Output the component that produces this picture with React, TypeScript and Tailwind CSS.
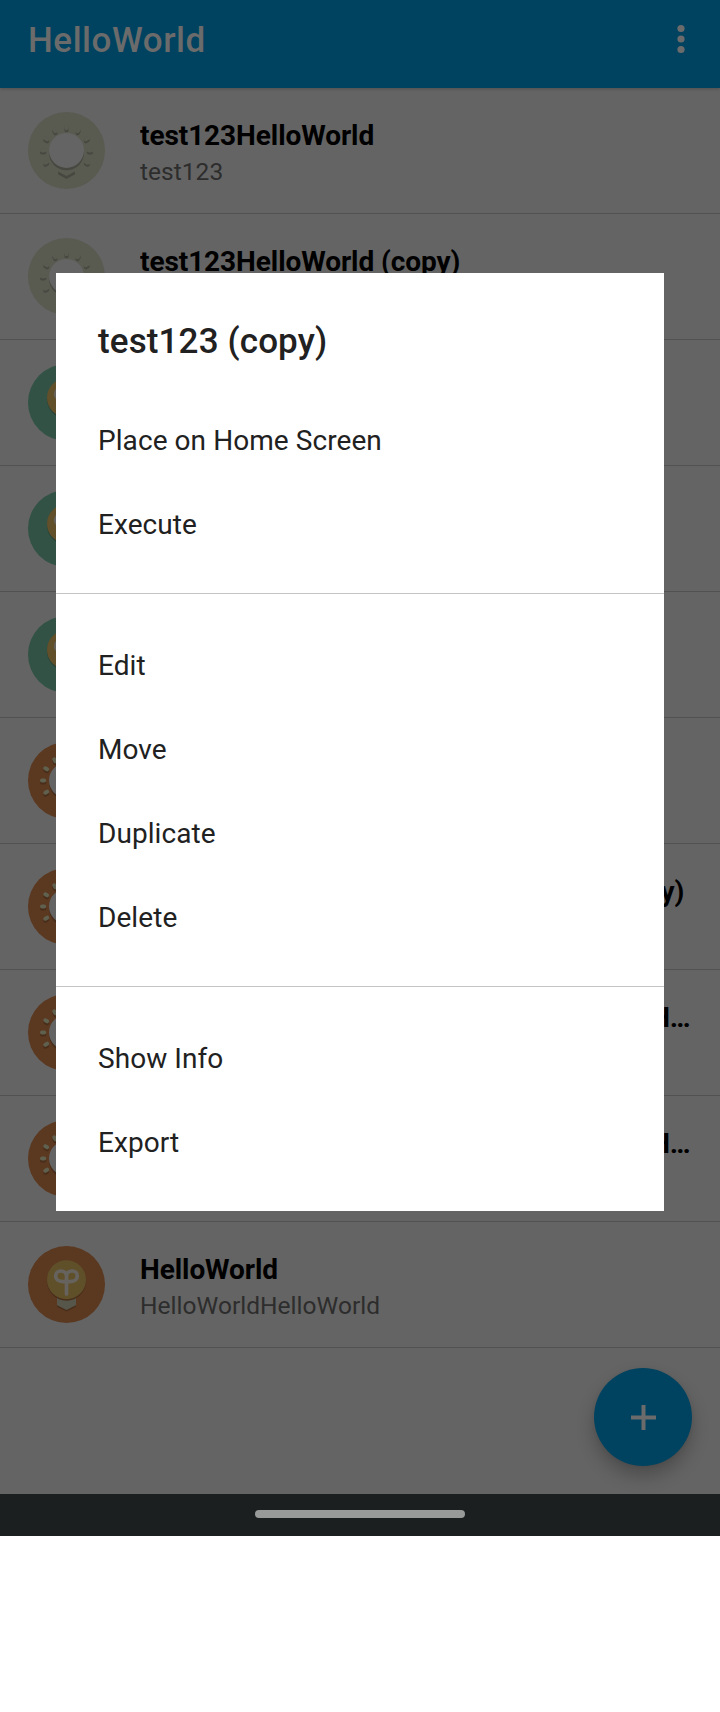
type Kind = "pale" | "green" | "sun" | "bulb";

const RAYS = [-120, -90, -60, -30, 0, 30, 60, 90, 120];

function SunIcon({ bg, ray, base, shadow }: { bg: string; ray: string; base: string; shadow: string }) {
  return (
    <svg viewBox="0 0 77 77" className="size-[77px] shrink-0">
      <circle cx="38.5" cy="38.5" r="38.5" fill={bg} />
      <g fill={shadow}>
        {RAYS.map((a) => (
          <g key={a} transform="translate(0 2)">
            <rect x="36.5" y="12" width="4" height="6.2" rx="2" transform={`rotate(${a} 38.5 38.5)`} />
          </g>
        ))}
        <path d="M30 59.500l8.500 4.500 8.500-4.500v2.800L38.500 67 30 62.300z" />
        <circle cx="38.5" cy="40.8" r="17.5" />
      </g>
      <g fill={ray}>
        {RAYS.map((a) => (
          <rect key={a} x="36.5" y="12" width="4" height="6.2" rx="2" transform={`rotate(${a} 38.5 38.5)`} />
        ))}
      </g>
      {base !== bg && <path d="M30 57.500q8.500 3 17 0V60l-8.500 4.500L30 60z" fill={base} />}
      <circle cx="38.5" cy="38.4" r="17.5" fill="#646464" />
    </svg>
  );
}

function BulbIcon({ bg, glass, shadow }: { bg: string; glass: string; shadow: string }) {
  return (
    <svg viewBox="0 0 77 77" className="size-[77px] shrink-0">
      <circle cx="38.5" cy="38.5" r="38.5" fill={bg} />
      <path d="M29 51h19v9.800L38.500 65.600 29 60.800z" fill={shadow} />
      <path d="M29 50h19v9.200L38.500 64 29 59.200z" fill="#56564a" />
      <circle cx="38.5" cy="35.3" r="19.5" fill={shadow} />
      <circle cx="38.5" cy="33.7" r="19.5" fill={glass} />
      <path
        d="M38.500 48V30.500C38.500 27 36 25 32.900 25c-3 0-5.200 2.200-5.200 5 0 3.600 3.600 5.700 7.600 5.700h6.400c4 0 7.600-2.100 7.600-5.700 0-2.800-2.200-5-5.200-5-3.100 0-5.600 2-5.600 5.500"
        fill="none"
        stroke="#66625e"
        strokeWidth="3.700"
        strokeLinecap="round"
        strokeLinejoin="round"
      />
    </svg>
  );
}

function RowIcon({ kind }: { kind: Kind }) {
  if (kind === "pale") return <SunIcon bg="#595a50" ray="#595a50" base="#595a50" shadow="#474840" />;
  if (kind === "sun") return <SunIcon bg="#5b3820" ray="#60604f" base="#59594c" shadow="#482d1a" />;
  if (kind === "green") return <BulbIcon bg="#315245" glass="#62502b" shadow="#274237" />;
  return <BulbIcon bg="#5b3820" glass="#60502a" shadow="#482d1a" />;
}

const ROWS: { kind: Kind; title: string; sub: string }[] = [
  { kind: "pale", title: "test123HelloWorld", sub: "test123" },
  { kind: "pale", title: "test123HelloWorld (copy)", sub: "test123" },
  { kind: "green", title: "test123", sub: "test123" },
  { kind: "green", title: "test123 (copy)", sub: "test123" },
  { kind: "green", title: "test123 (copy)", sub: "test123" },
  { kind: "sun", title: "test123HelloWorld", sub: "test123" },
  { kind: "sun", title: "test123HelloWorldHelloWorld (copy) (copy)", sub: "test123" },
  { kind: "sun", title: "test123HelloWorldHelloWorldHelloWorldHelloWorld", sub: "test123" },
  { kind: "sun", title: "test123HelloWorldHelloWorldHelloWorldHelloWorld", sub: "test123" },
  { kind: "bulb", title: "HelloWorld", sub: "HelloWorldHelloWorld" },
];

const GROUPS = [
  ["Place on Home Screen", "Execute"],
  ["Edit", "Move", "Duplicate", "Delete"],
  ["Show Info", "Export"],
];

export default function App() {
  return (
    <div className="flex h-[1712px] w-[720px] flex-col bg-white font-['Roboto',sans-serif]">
      <div className="relative flex h-[1536px] flex-col overflow-hidden bg-[#646464]">
        <header className="relative flex h-[88px] shrink-0 items-start justify-between bg-[#004360] pt-[19px] pr-[35px] pl-7 shadow-[0_1px_3px_rgba(0,0,0,0.2)]">
          <h1 className="pt-px text-[35px] leading-[41px] font-medium tracking-[0.53px] text-[#6b6b6b]">HelloWorld</h1>
          <svg viewBox="0 0 8 30" className="mt-[5px] h-[30px] w-2" fill="#6b6b6b">
            <circle cx="4" cy="4.5" r="3.6" />
            <circle cx="4" cy="15" r="3.6" />
            <circle cx="4" cy="25.5" r="3.6" />
          </svg>
        </header>
        <ul className="flex-1">
          {ROWS.map((r, i) => (
            <li key={i} className="flex h-[126px] items-center border-b border-[#525252] px-7">
              <RowIcon kind={r.kind} />
              <div className="ml-[35px] h-[72px] min-w-0 flex-1 pt-[3px]">
                <div className="truncate text-[28px] leading-[36px] font-bold tracking-[-0.08px] text-black">
                  {r.title}
                </div>
                <div className="truncate text-[24.5px] leading-[36px] tracking-[0.03px] text-[#2d2d2d]">{r.sub}</div>
              </div>
            </li>
          ))}
        </ul>
        <button className="absolute top-[1368px] left-[594px] flex size-[98px] items-center justify-center rounded-full bg-[#004360] shadow-[0_10px_18px_rgba(0,0,0,0.24),0_1px_4px_rgba(0,0,0,0.06)]">
          <svg viewBox="0 0 25 25" className="size-[25px]" fill="#6b6b6b">
            <path d="M10.500 0h4v10.500H25v4H14.500V25h-4V14.500H0v-4h10.500z" />
          </svg>
        </button>
        <footer className="relative flex h-[42px] shrink-0 justify-center bg-[#1b1f20] pt-4">
          <span className="h-2 w-[210px] rounded-full bg-[#989a99]" />
        </footer>
        <section className="absolute top-[273px] left-[56px] h-[938px] w-[608px] bg-white text-[#212121]">
          <h2 className="px-[42px] pt-[48px] text-[35px] leading-[41px] font-medium tracking-[0.13px]">
            test123 (copy)
          </h2>
          {GROUPS.map((g, i) => (
            <ul key={i} className={i === 0 ? "pt-[36px] pb-[27px]" : "border-t border-[#c4c4c4] pt-[29px] pb-[27px]"}>
              {g.map((t) => (
                <li key={t} className="flex h-[84px] items-center px-[42px] pt-px text-[28px] tracking-[0.07px]">
                  {t}
                </li>
              ))}
            </ul>
          ))}
        </section>
      </div>
    </div>
  );
}
